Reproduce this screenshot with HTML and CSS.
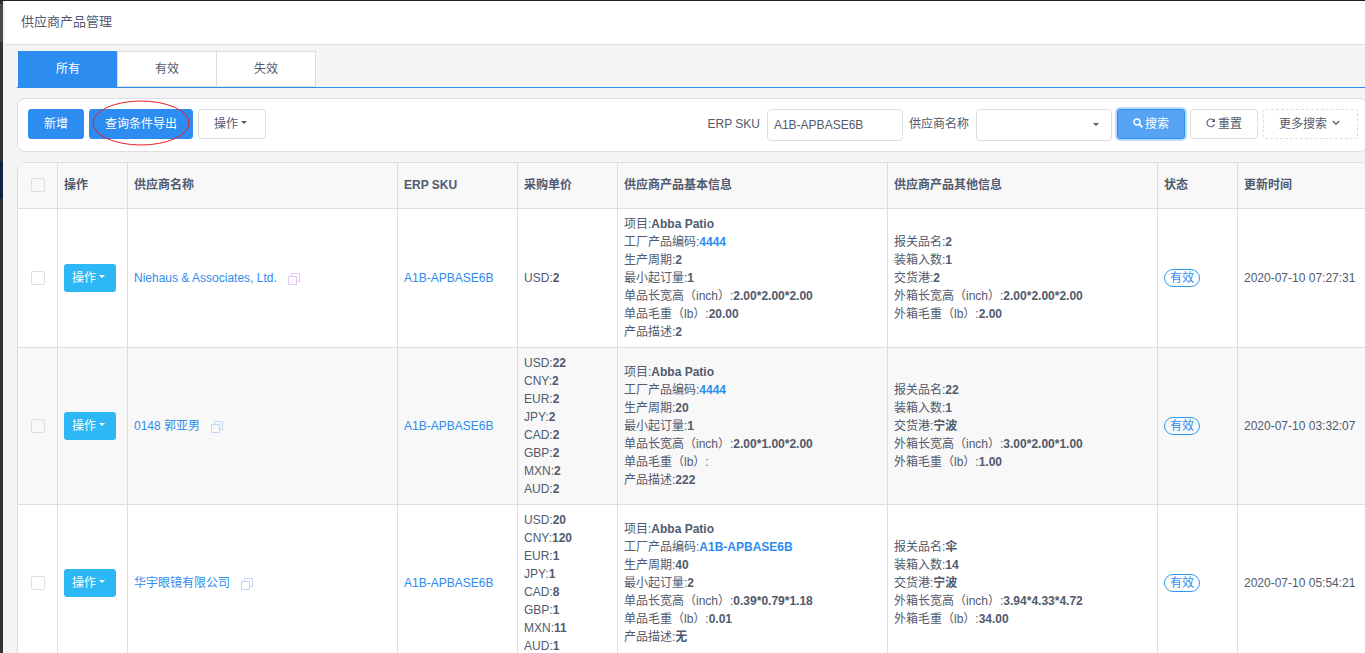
FILE: index.html
```html
<!DOCTYPE html>
<html lang="zh-CN">
<head>
    <meta charset="UTF-8">
    <meta name="viewport" content="width=device-width, initial-scale=1.0">
    <title>供应商产品管理</title>
    <link rel="stylesheet" href="styles.css">
</head>
<body>
    <svg class="sprite" aria-hidden="true">
        <symbol id="icon-search" viewBox="0 0 10 10"><circle cx="4" cy="4" r="3" fill="none" stroke="currentColor" stroke-width="1.4"/><path d="M6.2 6.2L9.3 9.3" stroke="currentColor" stroke-width="1.7"/></symbol>
        <symbol id="icon-refresh" viewBox="0 0 10 10"><path d="M8.4 6.6A3.9 3.9 0 1 1 7.8 2.3" fill="none" stroke="currentColor" stroke-width="1.1"/><path d="M9 .6V4H5.6z" fill="currentColor"/></symbol>
        <symbol id="icon-down" viewBox="0 0 8 8"><path d="M.8 2L4 5.4L7.2 2" fill="none" stroke="currentColor" stroke-width="1.2"/></symbol>
        <symbol id="icon-copy" viewBox="0 0 12 12"><path d="M.5 3.5H8.5V11.5H.5zM3.5 3V.5H11.5V8.5H9" fill="none" stroke="currentColor"/></symbol>
    </svg>

    <div class="sidebar-edge"></div>

    <div class="main">
        <header class="page-title">供应商产品管理</header>

        <div class="content">
            <nav class="tabs">
                <a href="#" class="tab active">所有</a>
                <a href="#" class="tab">有效</a>
                <a href="#" class="tab">失效</a>
            </nav>

            <form class="toolbar">
                <div class="toolbar-group">
                    <button type="button" class="btn btn-primary">新增</button>
                    <div class="export">
                        <button type="button" class="btn btn-primary">查询条件导出</button>
                        <svg class="export-mark" viewBox="0 0 98 46" aria-hidden="true"><ellipse cx="49" cy="23" rx="48" ry="22" fill="none" stroke="#ed1c24"/></svg>
                    </div>
                    <button type="button" class="btn">操作<span class="caret"></span></button>
                </div>
                <div class="toolbar-group search">
                    <label for="sku">ERP SKU</label>
                    <input type="text" id="sku" class="field" value="A1B-APBASE6B">
                    <label for="supplier">供应商名称</label>
                    <div class="select-wrap">
                        <select id="supplier" class="field"><option></option></select>
                        <span class="caret"></span>
                    </div>
                    <button type="button" class="btn btn-search"><svg class="icon"><use href="#icon-search"/></svg>搜索</button>
                    <button type="button" class="btn"><svg class="icon"><use href="#icon-refresh"/></svg>重置</button>
                    <button type="button" class="btn btn-dashed">更多搜索<svg class="icon icon-down"><use href="#icon-down"/></svg></button>
                </div>
            </form>

            <div class="table-box">
                <table>
                    <colgroup>
                        <col class="w40"><col class="w70"><col class="w270"><col class="w120"><col class="w100"><col class="w270"><col class="w270"><col class="w80"><col>
                    </colgroup>
                    <thead>
                        <tr>
                            <th class="check"><input type="checkbox" aria-label="全选"></th>
                            <th>操作</th>
                            <th>供应商名称</th>
                            <th>ERP SKU</th>
                            <th>采购单价</th>
                            <th>供应商产品基本信息</th>
                            <th>供应商产品其他信息</th>
                            <th>状态</th>
                            <th>更新时间</th>
                        </tr>
                    </thead>
                    <tbody>
                        <tr>
                            <td class="check"><input type="checkbox" aria-label="选择"></td>
                            <td><button type="button" class="btn-row">操作<span class="caret"></span></button></td>
                            <td><a href="#">Niehaus &amp; Associates, Ltd.</a><svg class="copy copy-pink"><use href="#icon-copy"/></svg></td>
                            <td><a href="#">A1B-APBASE6B</a></td>
                            <td>USD:<b>2</b></td>
                            <td>
                                项目:<b>Abba Patio</b><br>
                                工厂产品编码:<a href="#"><b>4444</b></a><br>
                                生产周期:<b>2</b><br>
                                最小起订量:<b>1</b><br>
                                单品长宽高（inch）:<b>2.00*2.00*2.00</b><br>
                                单品毛重（lb）:<b>20.00</b><br>
                                产品描述:<b>2</b>
                            </td>
                            <td>
                                报关品名:<b>2</b><br>
                                装箱入数:<b>1</b><br>
                                交货港:<b>2</b><br>
                                外箱长宽高（inch）:<b>2.00*2.00*2.00</b><br>
                                外箱毛重（lb）:<b>2.00</b>
                            </td>
                            <td><span class="status">有效</span></td>
                            <td>2020-07-10 07:27:31</td>
                        </tr>
                        <tr>
                            <td class="check"><input type="checkbox" aria-label="选择"></td>
                            <td><button type="button" class="btn-row">操作<span class="caret"></span></button></td>
                            <td><a href="#">0148 郭亚男</a><svg class="copy"><use href="#icon-copy"/></svg></td>
                            <td><a href="#">A1B-APBASE6B</a></td>
                            <td>
                                USD:<b>22</b><br>
                                CNY:<b>2</b><br>
                                EUR:<b>2</b><br>
                                JPY:<b>2</b><br>
                                CAD:<b>2</b><br>
                                GBP:<b>2</b><br>
                                MXN:<b>2</b><br>
                                AUD:<b>2</b>
                            </td>
                            <td>
                                项目:<b>Abba Patio</b><br>
                                工厂产品编码:<a href="#"><b>4444</b></a><br>
                                生产周期:<b>20</b><br>
                                最小起订量:<b>1</b><br>
                                单品长宽高（inch）:<b>2.00*1.00*2.00</b><br>
                                单品毛重（lb）:<br>
                                产品描述:<b>222</b>
                            </td>
                            <td>
                                报关品名:<b>22</b><br>
                                装箱入数:<b>1</b><br>
                                交货港:<b>宁波</b><br>
                                外箱长宽高（inch）:<b>3.00*2.00*1.00</b><br>
                                外箱毛重（lb）:<b>1.00</b>
                            </td>
                            <td><span class="status">有效</span></td>
                            <td>2020-07-10 03:32:07</td>
                        </tr>
                        <tr>
                            <td class="check"><input type="checkbox" aria-label="选择"></td>
                            <td><button type="button" class="btn-row">操作<span class="caret"></span></button></td>
                            <td><a href="#">华宇眼镜有限公司</a><svg class="copy"><use href="#icon-copy"/></svg></td>
                            <td><a href="#">A1B-APBASE6B</a></td>
                            <td>
                                USD:<b>20</b><br>
                                CNY:<b>120</b><br>
                                EUR:<b>1</b><br>
                                JPY:<b>1</b><br>
                                CAD:<b>8</b><br>
                                GBP:<b>1</b><br>
                                MXN:<b>11</b><br>
                                AUD:<b>1</b>
                            </td>
                            <td>
                                项目:<b>Abba Patio</b><br>
                                工厂产品编码:<a href="#"><b>A1B-APBASE6B</b></a><br>
                                生产周期:<b>40</b><br>
                                最小起订量:<b>2</b><br>
                                单品长宽高（inch）:<b>0.39*0.79*1.18</b><br>
                                单品毛重（lb）:<b>0.01</b><br>
                                产品描述:<b>无</b>
                            </td>
                            <td>
                                报关品名:<b>伞</b><br>
                                装箱入数:<b>14</b><br>
                                交货港:<b>宁波</b><br>
                                外箱长宽高（inch）:<b>3.94*4.33*4.72</b><br>
                                外箱毛重（lb）:<b>34.00</b>
                            </td>
                            <td><span class="status">有效</span></td>
                            <td>2020-07-10 05:54:21</td>
                        </tr>
                    </tbody>
                </table>
            </div>
        </div>
    </div>
</body>
</html>
```

FILE: styles.css
```css
* {
    box-sizing: border-box;
}

body {
    margin: 0;
    height: 100vh;
    display: flex;
    overflow: hidden;
    border-top: 1px solid #231f20;
    background: #f4f4f4;
    color: #515a6e;
    font-family: "Liberation Sans", "Noto Sans CJK SC", sans-serif;
    font-size: 12px;
    line-height: 18px;
}

a {
    color: #2d8cf0;
    text-decoration: none;
}

.sprite {
    display: none;
}

/* 左侧菜单露出的边缘 */
.sidebar-edge {
    flex: none;
    width: 3px;
    background: linear-gradient(#333 3px, #4a4a4a 3px 41px, #333 41px 160px, #14204a 160px 198px, #333 198px);
}

.main {
    flex: 1;
    min-width: 0;
}

.page-title {
    height: 44px;
    margin-left: 2px;
    padding-left: 16px;
    border-bottom: 1px solid #dcdee2;
    background: #fff;
    font-size: 13px;
    line-height: 42px;
}

.content {
    margin-right: -3px;
    padding: 6px 0 0 14px;
}

.tabs {
    display: flex;
    height: 37px;
    padding-left: 1px;
    border-bottom: 1px solid #2d8cf0;
}

.tab {
    width: 100px;
    margin-right: -1px;
    border: 1px solid #dcdee2;
    background: #fff;
    color: #515a6e;
    line-height: 34px;
    text-align: center;
}

.tab.active {
    border-color: #2d8cf0;
    background: #2d8cf0;
    color: #fff;
}

.toolbar {
    display: flex;
    justify-content: space-between;
    align-items: flex-start;
    height: 54px;
    margin: 10px 0;
    padding: 10px 9px 0 10px;
    border: 1px solid #dcdee2;
    border-radius: 8px;
    background: #fff;
}

.toolbar-group {
    display: flex;
    align-items: flex-start;
    gap: 5px;
}

.btn {
    display: inline-flex;
    align-items: center;
    height: 30px;
    padding: 0 15px;
    border: 1px solid #dcdee2;
    border-radius: 3px;
    background: #fff;
    color: #515a6e;
    font: inherit;
    cursor: pointer;
}

.btn-primary {
    border-color: #2d8cf0;
    background: #2d8cf0;
    color: #fff;
}

.btn-search {
    border-color: #2d8cf0;
    background: #57a3f3;
    color: #fff;
    box-shadow: 0 0 0 2px rgba(45, 140, 240, 0.3);
}

.btn-dashed {
    border-style: dashed;
}

.export {
    position: relative;
    display: flex;
}

/* 导出按钮上的红圈标记 */
.export-mark {
    position: absolute;
    top: -9px;
    left: 3px;
    width: 98px;
    height: 46px;
    pointer-events: none;
}

.caret {
    margin: 0 3px 4px;
    border: 3px solid transparent;
    border-top-color: currentColor;
    border-bottom: 0;
}

.icon {
    width: 10px;
    height: 10px;
    margin: 0 2px 2px 0;
}

.icon-down {
    width: 8px;
    height: 8px;
    margin: 0 2px 2px 5px;
}

.field {
    width: 136px;
    height: 32px;
    padding: 0 6px;
    border: 1px solid #dcdee2;
    border-radius: 4px;
    background: #fff;
    color: #515a6e;
    font: inherit;
}

.select-wrap {
    position: relative;
    display: flex;
}

.select-wrap select {
    appearance: none;
}

.select-wrap .caret {
    position: absolute;
    top: 14px;
    right: 10px;
    pointer-events: none;
}

.search label {
    margin: 0 2px 0 1px;
    line-height: 30px;
}

.table-box {
    overflow: hidden;
    border: 1px solid #dcdee2;
    border-radius: 8px 8px 0 0;
}

table {
    width: 100%;
    table-layout: fixed;
    border-spacing: 0;
    background: #fff;
}

.w40 { width: 40px; }
.w70 { width: 70px; }
.w80 { width: 80px; }
.w100 { width: 100px; }
.w120 { width: 120px; }
.w270 { width: 270px; }

th, td {
    padding: 6px;
    border-right: 1px solid #dcdee2;
    border-bottom: 1px solid #dcdee2;
    text-align: left;
    white-space: nowrap;
}

th {
    height: 46px;
    padding-bottom: 8px;
    background: #f8f8f9;
}

tbody tr:nth-child(even) {
    background: #f8f8f8;
}

.check input {
    appearance: none;
    display: block;
    width: 14px;
    height: 14px;
    margin: 0 auto;
    border: 1px solid #dcdee2;
    border-radius: 2px;
    background: transparent;
}

.btn-row {
    display: flex;
    align-items: center;
    height: 28px;
    padding: 0 8px;
    border: 0;
    border-radius: 3px;
    background: #2db7f5;
    color: #fff;
    font: inherit;
    cursor: pointer;
}

.copy {
    width: 12px;
    height: 12px;
    margin-left: 11px;
    color: #c3d6f8;
    vertical-align: -3px;
}

.copy-pink {
    color: #e6c6f4;
}

.status {
    display: inline-block;
    padding: 0 5px;
    border: 1px solid #2d9cf0;
    border-radius: 9px;
    color: #2d8cf0;
    line-height: 16px;
    vertical-align: middle;
}
```
